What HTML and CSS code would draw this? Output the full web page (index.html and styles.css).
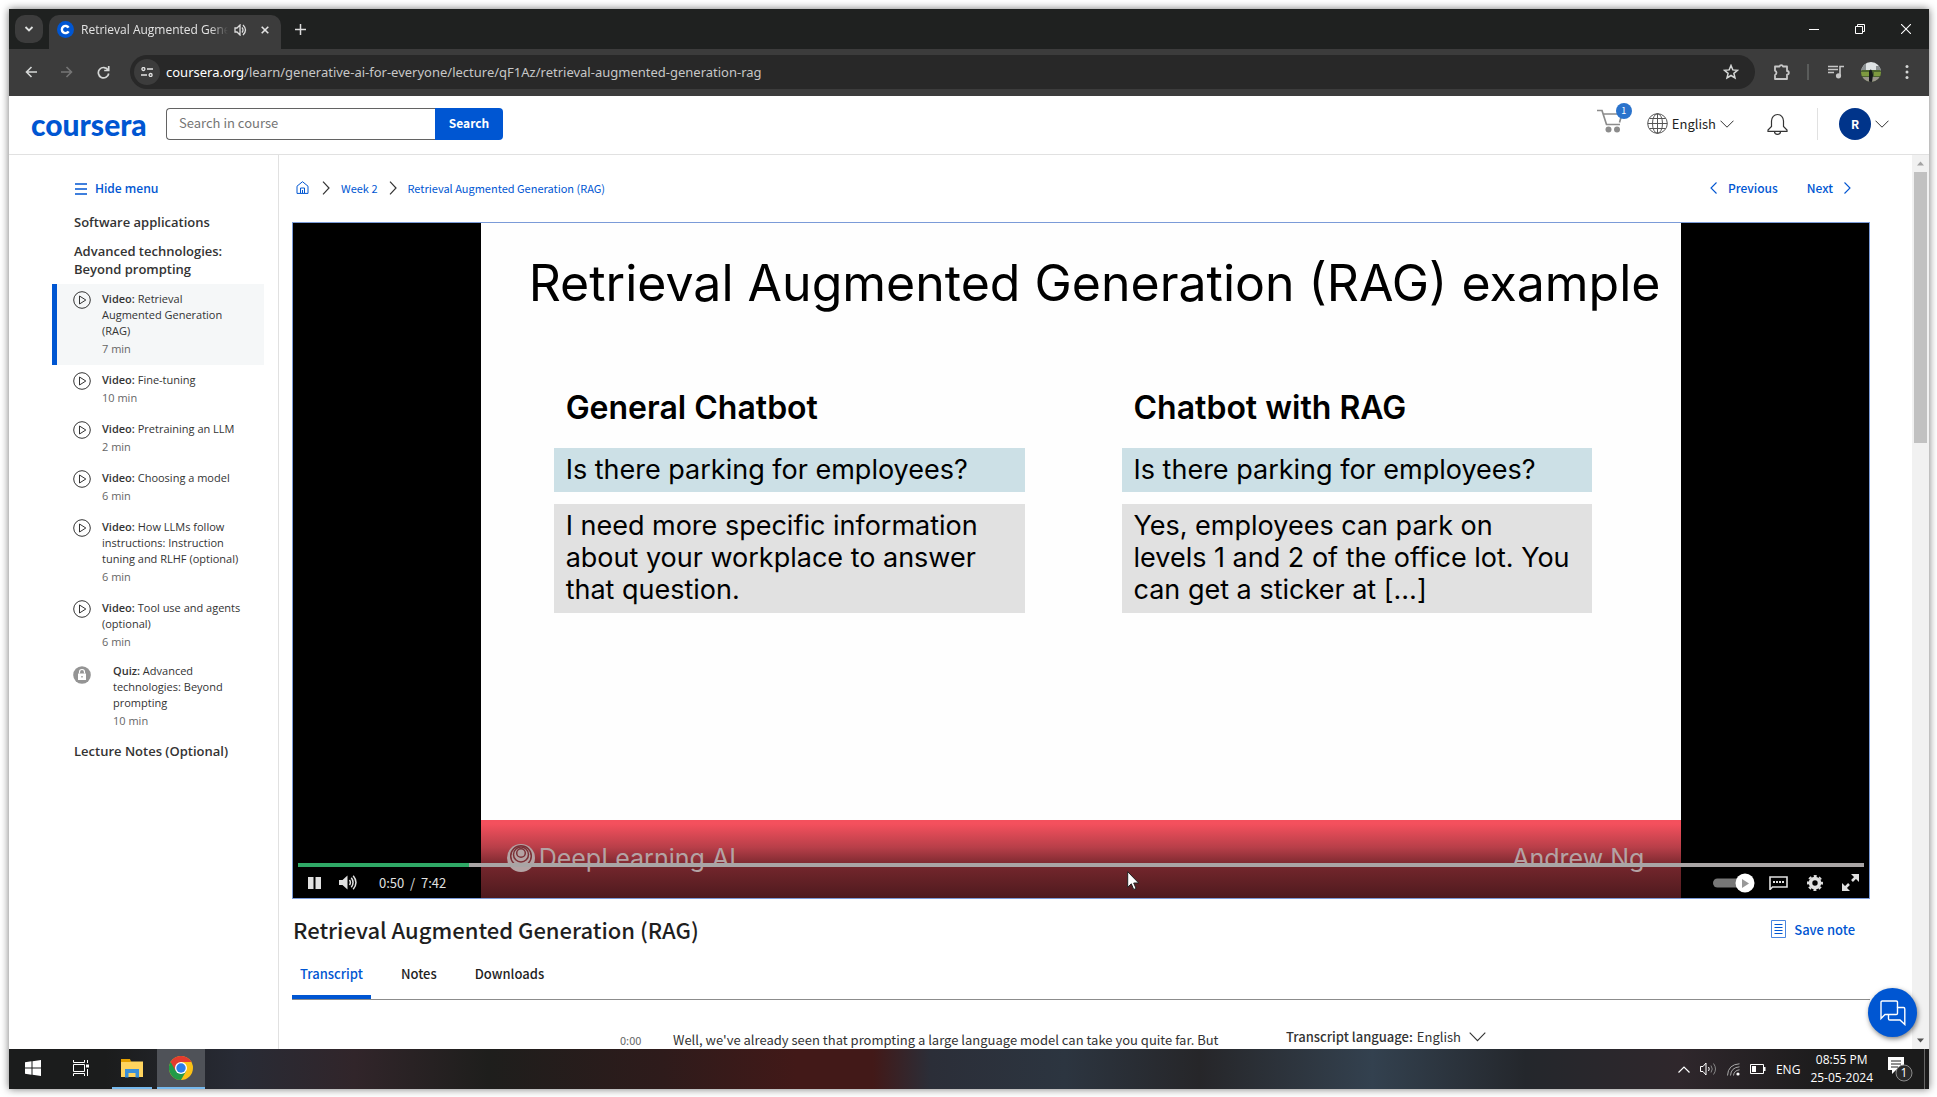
FILE: index.html
```html
<!DOCTYPE html>
<html lang="en">
<head>
<meta charset="utf-8">
<title>Retrieval Augmented Generation (RAG) | Coursera</title>
<link rel="stylesheet" href="styles.css">
</head>
<body>
<div class="screen">
  <div class="tabstrip">
    <button class="tab-search" aria-label="Search tabs"><svg width="10" height="6" viewBox="0 0 10 6"><path d="M1.500 1L5 4.500 8.500 1" fill="none" stroke="#dfe1e0" stroke-width="1.800"/></svg></button>
    <div class="tab">
      <svg class="favicon" width="17" height="17" viewBox="0 0 17 17"><circle cx="8.500" cy="8.500" r="8.500" fill="#0056d2"/><path d="M11.600 10.300A3.600 3.600 0 1 1 11.600 6.700" fill="none" stroke="#fff" stroke-width="2.400"/></svg>
      <span class="tab-title">Retrieval Augmented Generation</span>
      <svg width="13" height="12" viewBox="0 0 13 12"><path d="M1 4h2l3-3v10L3 8H1z" fill="none" stroke="#dcdcdc" stroke-width="1.300"/><path d="M8 3.500q2 2.500 0 5M9 1q5 5 0 10" fill="none" stroke="#dcdcdc" stroke-width="1.300"/></svg>
      <button class="tab-close" aria-label="Close tab"><svg width="8" height="8" viewBox="0 0 8 8"><path d="M.7.7l6.600 6.600M7.300.7L.7 7.300" stroke="#e3e3e3" stroke-width="1.600"/></svg></button>
    </div>
    <button class="new-tab" aria-label="New tab"><svg width="11" height="11" viewBox="0 0 11 11"><path d="M5.500 0v11M0 5.500h11" stroke="#dcdcdc" stroke-width="1.500"/></svg></button>
    <div class="win-controls">
      <button aria-label="Minimize"><svg width="10" height="10" viewBox="0 0 10 10"><path d="M0 5.500h10" stroke="#fff"/></svg></button>
      <button aria-label="Restore"><svg width="10" height="10" viewBox="0 0 10 10"><path d="M.5 2.500h7v7h-7zM2.500 2.500v-2h7v7h-2" fill="none" stroke="#fff"/></svg></button>
      <button aria-label="Close"><svg width="10" height="10" viewBox="0 0 10 10"><path d="M0 0l10 10M10 0L0 10" stroke="#fff" stroke-width="1.100"/></svg></button>
    </div>
  </div>

  <div class="toolbar">
    <div class="nav-buttons">
      <button aria-label="Back"><svg width="12" height="12" viewBox="0 0 12 12"><path d="M12 6H1.500M6.500 1l-5 5 5 5" fill="none" stroke="#d5d7d6" stroke-width="1.600"/></svg></button>
      <button aria-label="Forward"><svg width="12" height="12" viewBox="0 0 12 12"><path d="M0 6h10.500M5.500 1l5 5-5 5" fill="none" stroke="#757575" stroke-width="1.600"/></svg></button>
      <button aria-label="Reload"><svg width="13" height="13" viewBox="0 0 13 13"><path d="M11 4A5.200 5.200 0 1 0 11.700 7.500M11.700 0v4.500H7.200" fill="none" stroke="#d5d7d6" stroke-width="1.700"/></svg></button>
    </div>
    <div class="omnibox">
      <span class="site-info"><svg width="12" height="10" viewBox="0 0 12 10"><path d="M6 2h6M0 8h6" stroke="#e3e3e3" stroke-width="1.500"/><circle cx="2.400" cy="2" r="1.500" fill="none" stroke="#e3e3e3" stroke-width="1.300"/><circle cx="9.600" cy="8" r="1.500" fill="none" stroke="#e3e3e3" stroke-width="1.300"/></svg></span>
      <span class="url"><b>coursera.org</b>/learn/generative-ai-for-everyone/lecture/qF1Az/retrieval-augmented-generation-rag</span>
      <svg width="16" height="16" viewBox="0 0 16 16"><path d="M8 1.500l1.800 4.400 4.700.4-3.600 3 1.100 4.700L8 11.500 4 14l1.100-4.700-3.600-3 4.700-.4z" fill="none" stroke="#d5d7d6" stroke-width="1.500"/></svg>
    </div>
    <div class="ext">
      <svg width="18" height="18" viewBox="0 0 18 18"><path d="M2 3.500h4.500a1.800 1.800 0 0 1 3.500 0h4V8a1.800 1.800 0 0 1 0 3.600V16H2v-4a2.300 2.300 0 0 0 0-4.300z" fill="none" stroke="#c7c7c7" stroke-width="1.800" stroke-linejoin="round"/></svg>
      <span class="ext-line"></span>
      <svg class="queue" width="16" height="14" viewBox="0 0 16 14"><path d="M0 1.500h10M0 4.500h10M0 7.500h6M12 11V1.500h4" fill="none" stroke="#c7c7c7" stroke-width="1.600"/><circle cx="10.500" cy="10.800" r="2.600" fill="#c7c7c7"/></svg>
      <svg class="profile" width="20" height="20" viewBox="0 0 20 20"><defs><clipPath id="pc"><circle cx="10" cy="10" r="10"/></clipPath></defs><g clip-path="url(#pc)"><path fill="#dfe3e4" d="M0 0h20v9H0z"/><path fill="#8b9092" d="M0 0h5v9H0zM15 4h5v5h-5z"/><path fill="#4d6630" d="M0 8h20v12H0z"/><path fill="#7e9a3f" d="M0 10h8v4H0zM13 10h7v4h-7z"/><path fill="#9a968c" d="M0 15h20v5H0z"/><path fill="#171a1c" d="M8 9q2-3 3 0l1 4-1 7H8z"/></g></svg>
      <svg class="dots" width="4" height="16" viewBox="0 0 4 16" fill="#d5d7d6"><circle cx="2" cy="2.500" r="1.500"/><circle cx="2" cy="8" r="1.500"/><circle cx="2" cy="13.500" r="1.500"/></svg>
    </div>
  </div>

  <header class="site-header">
    <a class="logo" href="#">coursera</a>
    <form class="search">
      <input type="text" placeholder="Search in course" aria-label="Search in course">
      <button type="button">Search</button>
    </form>
    <div class="header-right">
      <button class="cart" aria-label="Cart"><svg width="27" height="24" viewBox="0 0 27 24"><path d="M0 1.500h5l4.500 14H23M6 5h19l-2.500 8.500M7 5" fill="none" stroke="#8c8c8c" stroke-width="1.700"/><circle cx="11.500" cy="20.500" r="3" fill="#8c8c8c"/><circle cx="20" cy="20.500" r="3" fill="#8c8c8c"/></svg><span class="badge">1</span></button>
      <button class="lang"><svg width="21" height="21" viewBox="0 0 21 21" fill="none" stroke="#555"><circle cx="10.500" cy="10.500" r="9.800"/><ellipse cx="10.500" cy="10.500" rx="5" ry="9.800"/><path d="M10.500.7v19.600M.7 10.500h19.600M2.500 5.500h16M2.500 15.500h16"/></svg><span>English</span><svg width="14" height="8" viewBox="0 0 14 8"><path d="M.5.700L7 7.200 13.500.700" fill="none" stroke="#333"/></svg></button>
      <button class="bell" aria-label="Notifications"><svg width="21" height="22" viewBox="0 0 21 22" fill="none" stroke="#333" stroke-width="1.200"><path d="M1 18.300V17l3.500-3.500V8a6 6.500 0 0 1 12 0v5.500L20 17v1.300z"/><path d="M7.500 18.500a3 2.800 0 0 0 6 0"/></svg></button>
      <button class="user" aria-label="Account"><span class="avatar">R</span><svg width="14" height="8" viewBox="0 0 14 8"><path d="M.5.700L7 7.200 13.500.700" fill="none" stroke="#333"/></svg></button>
    </div>
  </header>

  <div class="page">
    <nav class="sidebar">
      <button class="hide-menu"><svg width="12" height="12" viewBox="0 0 12 12"><path d="M0 1h12M0 6h12M0 11h12" stroke="#0056d2" stroke-width="1.600"/></svg>Hide menu</button>
      <h3>Software applications</h3>
      <h3>Advanced technologies: Beyond prompting</h3>
      <ul class="lessons">
        <li class="active"><a href="#"><svg class="ico" viewBox="0 0 18 18"><use href="#play"/></svg><span class="txt"><span><b>Video:</b> Retrieval Augmented Generation (RAG)</span><small>7 min</small></span></a></li>
        <li><a href="#"><svg class="ico" viewBox="0 0 18 18"><use href="#play"/></svg><span class="txt"><span><b>Video:</b> Fine-tuning</span><small>10 min</small></span></a></li>
        <li><a href="#"><svg class="ico" viewBox="0 0 18 18"><use href="#play"/></svg><span class="txt"><span><b>Video:</b> Pretraining an LLM</span><small>2 min</small></span></a></li>
        <li><a href="#"><svg class="ico" viewBox="0 0 18 18"><use href="#play"/></svg><span class="txt"><span><b>Video:</b> Choosing a model</span><small>6 min</small></span></a></li>
        <li><a href="#"><svg class="ico" viewBox="0 0 18 18"><use href="#play"/></svg><span class="txt"><span><b>Video:</b> How LLMs follow instructions: Instruction tuning and RLHF (optional)</span><small>6 min</small></span></a></li>
        <li><a href="#"><svg class="ico" viewBox="0 0 18 18"><use href="#play"/></svg><span class="txt"><span><b>Video:</b> Tool use and agents (optional)</span><small>6 min</small></span></a></li>
        <li class="quiz"><a href="#"><svg class="ico" viewBox="0 0 18 18"><circle cx="9" cy="9" r="8.800" fill="#949494"/><path d="M5 7.500h8V14H5z" fill="#fff"/><path d="M6.500 7.500V6a2.500 2.500 0 0 1 5 0v1.500" fill="none" stroke="#fff" stroke-width="1.200"/><path d="M8.300 10h1.400v1.500H8.300z" fill="#949494"/></svg><span class="txt"><span><b>Quiz:</b> Advanced technologies: Beyond prompting</span><small>10 min</small></span></a></li>
      </ul>
      <h3>Lecture Notes (Optional)</h3>
      <svg class="defs" width="0" height="0"><defs><g id="play" fill="none" stroke="#333"><circle cx="9" cy="9" r="8.300"/><path d="M6.500 5v8l6.300-4z"/></g></defs></svg>
    </nav>

    <main class="content">
      <div class="crumb-row">
        <nav class="crumbs">
          <a class="home" href="#" aria-label="Home"><svg width="13" height="13" viewBox="0 0 13 13"><path d="M1 12.400V5.200L6.500.7 12 5.200v7.200zM4.500 12V7h4v5M6.500 9v3" fill="none" stroke="#0056d2" stroke-width="1"/></svg></a>
          <svg width="8" height="14" viewBox="0 0 8 14"><path d="M1 .7L7 7l-6 6.300" fill="none" stroke="#333" stroke-width="1.200"/></svg>
          <a href="#">Week 2</a>
          <svg width="8" height="14" viewBox="0 0 8 14"><path d="M1 .7L7 7l-6 6.300" fill="none" stroke="#333" stroke-width="1.200"/></svg>
          <a href="#">Retrieval Augmented Generation (RAG)</a>
        </nav>
        <div class="pager">
          <a href="#"><svg width="7" height="12" viewBox="0 0 7 12"><path d="M6.500.5L1 6l5.500 5.500" fill="none" stroke="#0056d2" stroke-width="1.100"/></svg>Previous</a>
          <a href="#">Next<svg width="7" height="12" viewBox="0 0 7 12"><path d="M.5.5L6 6 .5 11.500" fill="none" stroke="#0056d2" stroke-width="1.100"/></svg></a>
        </div>
      </div>

      <section class="video">
        <div class="slide">
          <h1>Retrieval Augmented Generation (RAG) example</h1>
          <div class="cols">
            <div class="col"><h2>General Chatbot</h2><p class="q">Is there parking for employees?</p><p class="a">I need more specific information<br>about your workplace to answer<br>that question.</p></div>
            <div class="col"><h2>Chatbot with RAG</h2><p class="q">Is there parking for employees?</p><p class="a">Yes, employees can park on<br>levels 1 and 2 of the office lot. You<br>can get a sticker at […]</p></div>
          </div>
          <div class="band">
            <span class="brand"><svg width="28" height="28" viewBox="0 0 28 28"><circle cx="14" cy="14" r="14" fill="#b4a3a4"/><g fill="none" stroke="#7b3036" stroke-width="1.500"><circle cx="14" cy="12" r="10.300"/><circle cx="14" cy="10.500" r="7.500"/><circle cx="14" cy="9" r="4.300"/></g></svg>DeepLearning.AI</span>
            <span>Andrew Ng</span>
          </div>
        </div>
        <div class="controls">
          <div class="track"><span class="played"></span></div>
          <div class="buttons">
            <button aria-label="Pause"><svg width="13" height="12" viewBox="0 0 13 12" fill="#e0e0e0"><path d="M0 0h5.500v12H0zM7.500 0H13v12H7.500z"/></svg></button>
            <button class="volume" aria-label="Mute"><svg width="18" height="15" viewBox="0 0 18 15"><path d="M0 5h3.500L8.500.5v14L3.500 10H0z" fill="#e0e0e0"/><path d="M10.500 5q1.800 2.500 0 5M12.300 2.800q3.500 4.700 0 9.400M14.200.8q5.500 6.700 0 13.400" fill="none" stroke="#e0e0e0" stroke-width="1.500"/></svg></button>
            <span class="time">0:50 &nbsp;/&nbsp; 7:42</span>
            <span class="right">
              <button aria-label="Autoplay"><svg width="42" height="20" viewBox="0 0 42 20"><rect y="5.500" width="34" height="9" rx="4.500" fill="#777"/><circle cx="32" cy="10" r="9.500" fill="#fff"/><path d="M29 6l7 4.500-7 4.500z" fill="#999"/></svg></button>
              <span class="icons">
                <button aria-label="Subtitles"><svg width="19" height="14" viewBox="0 0 19 14"><path d="M1 13.500V1h17v10H3.500z" fill="none" stroke="#e0e0e0" stroke-width="1.600"/><path d="M4 6h11" stroke="#e0e0e0" stroke-width="2" stroke-dasharray="2 1"/></svg></button>
                <button aria-label="Settings"><svg width="16" height="16" viewBox="0 0 16 16"><circle cx="8" cy="8" r="4.500" fill="none" stroke="#e0e0e0" stroke-width="3.600"/><circle cx="8" cy="8" r="7" fill="none" stroke="#e0e0e0" stroke-width="2" stroke-dasharray="3 2.498" stroke-dashoffset="1.500"/></svg></button>
                <button aria-label="Full screen"><svg width="17" height="17" viewBox="0 0 17 17"><path d="M2 15l5-5M10 7l5-5" stroke="#e0e0e0" stroke-width="2.600"/><path d="M9 0h8v8zM0 9v8h8z" fill="#e0e0e0"/></svg></button>
              </span>
            </span>
          </div>
        </div>
      </section>

      <div class="title-row">
        <h1>Retrieval Augmented Generation (RAG)</h1>
        <button class="save"><svg width="15" height="18" viewBox="0 0 15 18"><path d="M.5.5h14v17H.5z" fill="none" stroke="#4a86df"/><path d="M3.500 4.500h8M3.500 7.500h8M3.500 10.500h8M3.500 13.500h8" stroke="#0056d2"/></svg>Save note</button>
      </div>
      <div class="tabs">
        <button class="on">Transcript</button><button>Notes</button><button>Downloads</button>
      </div>
      <div class="transcript">
        <span class="stamp">0:00</span>
        <p>Well, we've already seen that prompting a large language model can take you quite far. But</p>
        <button class="tlang"><b>Transcript language:</b> English<svg width="17" height="10" viewBox="0 0 17 10"><path d="M.7.700L8.500 8.700 16.300.700" fill="none" stroke="#333" stroke-width="1.100"/></svg></button>
      </div>
    </main>

    <div class="scrollbar"><svg width="17" height="17" viewBox="0 0 17 17"><path d="M5 10.500l3.500-4 3.500 4z" fill="#a3a3a3"/></svg><span class="thumb"></span><svg width="17" height="17" viewBox="0 0 17 17"><path d="M5 6.500l3.500 4 3.500-4z" fill="#505050"/></svg></div>
    <button class="chat" aria-label="Chat"><svg width="26" height="26" viewBox="0 0 26 26" fill="none" stroke="#fff" stroke-width="1.400"><path d="M17.500 7.500V2.300Q17.500 1 16.200 1H2.300Q1 1 1 2.300v16.200l4-4h3"/><path d="M17.500 7.500v5.700q0 1.300-1.300 1.300H8.500v4.200Q8.500 20 9.800 20H20l4.800 4.500V9q0-1.500-1.300-1.500z"/></svg></button>
  </div>

  <footer class="taskbar">
    <button aria-label="Start"><svg width="16" height="16" viewBox="0 0 16 16" fill="#fff"><path d="M0 2.200l6.500-.9v6.200H0zM7.500 1.200L16 0v7.500H7.500zM0 8.500h6.500v6.200L0 13.800zM7.500 8.500H16V16l-8.500-1.200z"/></svg></button>
    <button aria-label="Task view"><svg width="17" height="16" viewBox="0 0 17 16" fill="none" stroke="#fff"><path d="M.5 0v2.500h11V0M.5 16v-2.500h11V16M.5 4.500h11v7H.5zM14.500 0v3M14.500 9v7"/><path d="M13 4.500h3v3h-3z" fill="#fff" stroke="none"/></svg></button>
    <button class="running" aria-label="File Explorer"><svg width="22" height="19" viewBox="0 0 22 19"><path d="M0 1h8.500l2 1.500H0z" fill="#e29a00"/><path d="M0 2.500h22V18H0z" fill="#ffd45e"/><path d="M0 0h9l1 3H0z" fill="#e5a000"/><path d="M4 10h14v8.500h-3.500V14h-7v4.500H4z" fill="#3a8fd8"/></svg></button>
    <button class="running current" aria-label="Google Chrome"><svg width="24" height="24" viewBox="0 0 24 24"><circle cx="12" cy="12" r="12" fill="#fbc116"/><path d="M1.600 6A12 12 0 0 0 12 24l5.200-9L12 12z" fill="#229a48"/><path d="M12 6h10.400A12 12 0 0 0 1.600 6l5.200 9L12 12z" fill="#e33b2e"/><circle cx="12" cy="12" r="6" fill="#fff"/><circle cx="12" cy="12" r="4.700" fill="#2b7de9"/></svg></button>
    <div class="tray">
      <svg width="12" height="7" viewBox="0 0 12 7"><path d="M.5 6.500L6 1l5.500 5.500" fill="none" stroke="#fff" stroke-width="1.200"/></svg>
      <svg width="17" height="14" viewBox="0 0 17 14" fill="none" stroke="#fff"><path d="M.5 4.500h2.500l3-3.500v12L3 9.500H.500zM8.500 5q1.500 2 0 4"/><path d="M11 3.500q2.500 3.500 0 7M13.500 1.500q4 5.500 0 11" stroke="#888"/></svg>
      <svg class="wifi" width="13" height="13" viewBox="0 0 13 13" fill="none" stroke="#aaa"><path d="M.5 12.500Q1 1.500 12.500.800M3.500 12.500Q4 4.500 12.500 3.800M6.500 12.500Q7 7.500 12.500 6.800"/><circle cx="11" cy="11" r="1.600" fill="#fff" stroke="none"/></svg>
      <svg width="16" height="10" viewBox="0 0 16 10"><path d="M.5.5h13v9H.5z" fill="none" stroke="#fff"/><path d="M2 2h4v6H2zM14 3h1.500v4H14z" fill="#fff"/></svg>
      <span class="eng">ENG</span>
      <span class="clock"><span>08:55 PM</span><span>25-05-2024</span></span>
      <svg class="notif" width="25" height="25" viewBox="0 0 25 25"><path d="M0 0h16v13H8l-4 4v-4H0z" fill="#fff"/><path d="M3 4h10M3 7h10M3 10h7" stroke="#222"/><circle cx="16" cy="16" r="8" fill="#2a2a2a" stroke="#8a8a8a"/><text x="16" y="20" text-anchor="middle" font-size="12" fill="#fff">1</text></svg>
    </div>
  </footer>
  <svg class="cursor" width="13" height="20" viewBox="0 0 13 20"><path d="M.7.700v15.500l3.600-3.400 2.400 5.700 2.400-1-2.400-5.500h5z" fill="#fff" stroke="#222"/></svg>
</div>
</body>
</html>
```
FILE: styles.css
```css
* { box-sizing: border-box; }
body { margin: 0; padding: 9px 8px 8px 9px; background: #fff; font-family: "Open Sans", sans-serif; color: #1f1f1f; }
button { border: 0; background: none; padding: 0; margin: 0; font: inherit; color: inherit; display: flex; align-items: center; }
a { color: #0056d2; text-decoration: none; }
svg { flex: none; display: block; }
h1, h2, h3, p, ul { margin: 0; padding: 0; }

.screen { position: relative; height: calc(100vh - 17px); display: flex; flex-direction: column; background: #fff; box-shadow: 0 0 8px rgba(0, 0, 0, .55); }

/* browser frame */
.tabstrip { height: 40px; flex: none; background: #1f2120; display: flex; align-items: center; padding-left: 6px; }
.tab-search { width: 28px; height: 28px; border-radius: 10px; background: #3c3c3c; justify-content: center; }
.tab { width: 232px; height: 34px; align-self: flex-end; margin-left: 6px; background: #3c3c3c; border-radius: 10px 10px 0 0; display: flex; align-items: center; padding: 0 12px 5px 8px; }
.tab-title { flex: 1; margin: 0 6px 0 7px; font-size: 12px; color: #e3e3e3; white-space: nowrap; overflow: hidden; mask-image: linear-gradient(90deg, #000 88%, transparent); }
.tab-close { margin-left: 14px; }
.new-tab { margin-left: 14px; }
.win-controls { margin-left: auto; display: flex; }
.win-controls button { width: 46px; height: 40px; justify-content: center; }
.toolbar { height: 47px; flex: none; background: #3c3c3c; display: flex; align-items: center; padding: 0 20px 1px 16px; }
.nav-buttons { display: flex; gap: 24px; width: 105px; }
.omnibox { flex: 1; height: 34px; border-radius: 17px; background: #282828; display: flex; align-items: center; padding: 0 16px 0 4px; }
.site-info { width: 26px; height: 26px; border-radius: 50%; background: #3c3c3c; display: flex; align-items: center; justify-content: center; }
.url { flex: 1; margin-left: 6px; font: 13px/20px "Noto Sans", sans-serif; color: #c7c7c7; white-space: nowrap; }
.url b { font-weight: 400; color: #fff; }
.ext { display: flex; align-items: center; margin-left: 18px; }
.ext-line { width: 2px; height: 16px; background: #5a5c5b; margin: 0 19px 0 16px; }
.profile { margin: 0 24px 0 17px; }

/* course header */
.site-header { height: 59px; flex: none; border-bottom: 1px solid #e1e1e1; display: flex; align-items: center; padding: 0 40px 3px 22px; font-family: "Noto Sans CJK SC", sans-serif; }
.logo { width: 135px; font: 900 30px/32px Lato, sans-serif; }
.search { display: flex; height: 32px; }
.search input { width: 269px; border: 1px solid #636363; border-right: 0; border-radius: 4px 0 0 4px; padding: 0 12px 1px; font: 13px/20px "Noto Sans CJK SC", sans-serif; }
.search input::placeholder { color: #757575; }
.search button { width: 68px; padding-bottom: 2px; justify-content: center; background: #0056d2; color: #fff; font-size: 12px; font-weight: 700; border-radius: 0 4px 4px 0; }
.header-right { margin-left: auto; display: flex; align-items: center; }
.cart { position: relative; margin: 0 23px 6px 0; }
.badge { position: absolute; left: 19px; top: -6px; width: 16px; height: 16px; border-radius: 50%; background: #2a73cc; color: #fff; font-size: 9px; line-height: 16px; text-align: center; }
.lang { gap: 4px; font-size: 13px; margin-right: 33px; }
.bell { margin-right: 29px; }
.user { gap: 4px; height: 32px; border-left: 1px solid #e1e1e1; padding-left: 21px; }
.avatar { width: 32px; height: 32px; border-radius: 50%; background: #00348a; color: #fff; font-size: 12px; font-weight: 700; line-height: 32px; text-align: center; }

/* page body */
.page { flex: 1; min-height: 0; display: flex; position: relative; overflow: hidden; }
.sidebar { width: 270px; flex: none; border-right: 1px solid #e1e1e1; padding: 24px 14px 0 43px; font-size: 11px; }
.hide-menu { color: #0056d2; font-size: 12px; font-weight: 600; line-height: 20px; gap: 8px; margin-left: 23px; }
.sidebar h3 { font-size: 13px; line-height: 18px; margin: 11px 20px 11px 22px; font-weight: 600; color: #333; }
.sidebar h3 + h3 { margin-bottom: 6px; }
.sidebar h3:first-of-type { margin-top: 14px; }
.sidebar .lessons + h3 { margin-top: 5px; }
.lessons { list-style: none; }
.lessons li { border-left: 5px solid transparent; padding: 7px 22px 6px 16px; }
.lessons .active { background: #f5f7f8; border-left-color: #0056d2; }
.lessons a { display: flex; gap: 11px; color: #333; line-height: 16px; }
.ico { width: 18px; height: 18px; }
.txt { display: flex; flex-direction: column; }
.txt b { font-weight: 600; }
.txt small { font-size: 11px; line-height: 20px; color: #666; }
.lessons .quiz { padding-top: 5px; }
.quiz .txt { padding-left: 11px; }
.quiz .ico { margin-top: 3px; }

.content { flex: 1; min-width: 0; padding: 0 42px 0 13px; font-family: "Noto Sans CJK SC", sans-serif; }
.crumb-row { height: 67px; display: flex; justify-content: space-between; align-items: center; padding: 0 19px 2px 4px; font-size: 12px; }
.crumbs { display: flex; align-items: center; gap: 11px; font-size: 11px; }
.home { padding-right: 2px; }
.pager { display: flex; gap: 29px; font-weight: 500; }
.pager a { display: flex; align-items: center; gap: 11px; }

.video { position: relative; background: #000; border: 1px solid #7b9bd8; aspect-ratio: 1577 / 677; display: flex; justify-content: center; }
.slide { height: 100%; aspect-ratio: 16 / 9; background: #fefefe; display: flex; flex-direction: column; font-family: Inter, sans-serif; color: #000; }
.slide h1 { font-size: 50px; line-height: 60px; font-weight: 400; padding: 30px 0 0 48px; white-space: nowrap; }
.cols { display: grid; grid-template-columns: 1fr 1fr; gap: 97px; padding: 76px 89px 0 73px; }
.col h2 { font-size: 32px; line-height: 38px; font-weight: 600; margin: 0 0 21px 12px; }
.col p { font-size: 27px; line-height: 32px; padding: 6px 12px; background: #cce0e6; white-space: nowrap; }
.col .a { background: #e1e1e1; margin-top: 12px; padding-bottom: 7px; }
.band { height: 78px; margin-top: auto; padding: 0 37px 2px 26px; background: linear-gradient(#f4505d 5%, #b83f49 35%, #73262c 60%, #4e1a1e); display: flex; justify-content: space-between; align-items: center; color: #b4a3a4; font-size: 25px; }
.brand { display: flex; align-items: center; gap: 4px; }
.controls { position: absolute; left: 5px; right: 5px; bottom: 0; }
.track { height: 4px; background: #a9a5a5; }
.played { display: block; width: 171px; height: 4px; background: #2fa866; }
.buttons { height: 31px; display: flex; align-items: center; padding: 0 5px 0 10px; }
.volume { margin-left: 18px; }
.time { margin-left: 22px; color: #e0e0e0; font: 13px/20px "Noto Sans CJK SC", sans-serif; }
.right { margin-left: auto; display: flex; align-items: center; gap: 14px; }
.icons { display: flex; align-items: center; gap: 19px; }

.title-row { display: flex; justify-content: space-between; align-items: center; padding: 10px 15px 0 1px; height: 50px; }
.title-row h1 { font-size: 22px; line-height: 36px; font-weight: 500; }
.save { gap: 8px; color: #0056d2; font-size: 13px; font-weight: 500; }
.tabs { display: flex; margin-top: 16px; height: 35px; border-bottom: 1px solid #8c8c8c; gap: 22px; }
.tabs button { padding: 0 8px 17px; font-size: 13px; font-weight: 500; line-height: 18px; }
.tabs .on { color: #0056d2; border-bottom: 4px solid #0056d2; padding-bottom: 13px; border-radius: 2px 2px 0 0; }
.transcript { display: flex; align-items: center; padding: 24px 0 0 328px; font-size: 13px; line-height: 26px; white-space: nowrap; color: #333; }
.stamp { width: 53px; font-size: 11px; color: #666; }
.transcript p { width: 613px; }
.tlang { gap: 4px; padding-bottom: 6px; }
.tlang b { font-weight: 500; }
.tlang svg { margin-left: 4px; }

.scrollbar { width: 17px; background: #f1f1f1; display: flex; flex-direction: column; }
.thumb { height: 271px; margin: 0 2px auto; background: #c1c1c1; }
.chat { position: absolute; right: 12px; bottom: 12px; width: 49px; height: 49px; border-radius: 50%; background: #0056d2; justify-content: center; box-shadow: 1px 2px 5px rgba(0, 0, 0, .5); }

/* desktop taskbar */
.taskbar { height: 40px; flex: none; display: flex; background: linear-gradient(90deg, #1b1c1c 0, #1b1c1c 5%, #282b35 12%, #31252a 18%, #1e1e1c 25%, #2e1b1b 34%, #421918 41%, #421918 45%, #2b2e38 48%, #2c3540 55%, #262629 62%, #33414f 71%, #24272c 79%, #2f272c 87%, #1b1b1b 95%); color: #fff; }
.taskbar button { width: 48px; justify-content: center; border-bottom: 2px solid transparent; }
.taskbar .running { width: 40px; margin-left: 7px; border-bottom-color: #76b9ed; }
.taskbar .current { width: 48px; background: #4f5258; margin-left: 5px; }
.tray { margin-left: auto; display: flex; align-items: center; gap: 10px; font-size: 12px; border-right: 1px solid #666; margin-right: 4px; padding-right: 11px; }
.clock { display: flex; flex-direction: column; align-items: center; line-height: 18px; margin-right: 5px; }
.cursor { position: absolute; left: 1118px; top: 862px; }
```
